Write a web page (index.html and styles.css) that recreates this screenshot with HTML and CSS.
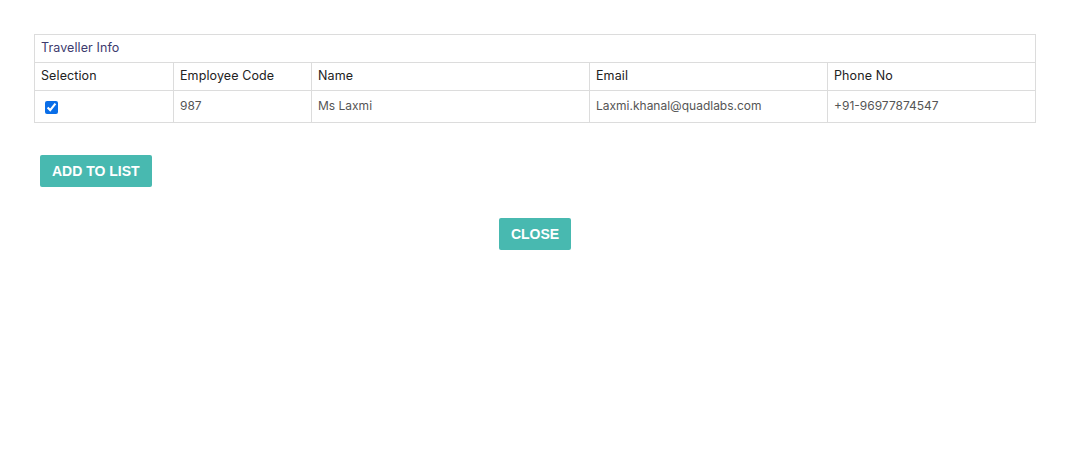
FILE: index.html
```html
<!DOCTYPE html>
<html>
<head>
<meta charset="utf-8">
<link rel="stylesheet" href="styles.css">
</head>
<body>
<div class="page">
  <table class="grid">
    <colgroup>
      <col class="c1"><col class="c2"><col class="c3"><col class="c4"><col class="c5">
    </colgroup>
    <thead>
      <tr><th class="caption" colspan="5">Traveller Info</th></tr>
      <tr class="head">
        <th>Selection</th><th>Employee Code</th><th>Name</th><th>Email</th><th>Phone No</th>
      </tr>
    </thead>
    <tbody>
      <tr class="row">
        <td><input type="checkbox" class="chk" checked></td>
        <td>987</td><td>Ms Laxmi</td><td>Laxmi.khanal@quadlabs.com</td><td>+91-96977874547</td>
      </tr>
    </tbody>
  </table>
  <div class="actions">
    <button class="btn">ADD TO LIST</button>
  </div>
  <div class="footer">
    <button class="btn">CLOSE</button>
  </div>
</div>
</body>
</html>
```
FILE: styles.css
```css
html, body { margin: 0; padding: 0; background: #fff; }
body { font-family: "Inter", "Lato", sans-serif; font-size: 12px; color: #333; }
.page { padding: 34px 35px 0 34px; }
.grid { width: 1001px; border-collapse: collapse; table-layout: fixed; }
.c1 { width: 139px; } .c2 { width: 138px; } .c3 { width: 278px; } .c4 { width: 238px; } .c5 { width: 208px; }
.grid th, .grid td { border: 1px solid #dcdcdc; text-align: left; padding: 0 6px 2px; font-weight: 400; }
.caption { height: 25px; color: #3d3b6e; font-size: 12.5px; letter-spacing: 0.1px; }
.head th { height: 25px; color: #222; font-size: 12.5px; letter-spacing: 0.1px; }
.row td { height: 29px; color: #555; padding-bottom: 2px; }
.row td:first-child { padding-bottom: 0; height: 31px; }
.chk { margin: 0 0 0 4px; width: 13px; height: 13px; vertical-align: middle; accent-color: #0a6ee8; }
.actions { padding: 32px 0 0 6px; }
.btn { background: #48b9b0; color: #fff; border: 0; border-radius: 2px; font-family: "Liberation Sans", Arial, sans-serif; font-weight: 700; font-size: 14px; height: 32px; padding: 0 12px; }
.footer { display: flex; justify-content: center; padding-top: 31px; padding-left: 1px; }
```
